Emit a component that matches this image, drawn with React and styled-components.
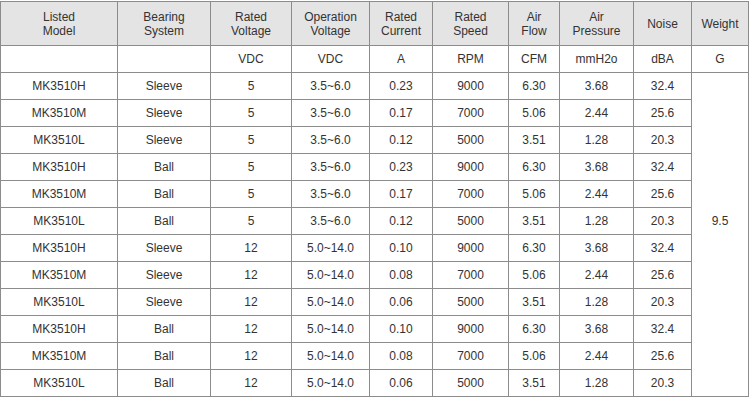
import React from "react";
import styled, { createGlobalStyle } from "styled-components";

const GlobalStyle = createGlobalStyle`
  body {
    margin: 0;
    background: #ffffff;
    font-family: "Liberation Sans", Arial, sans-serif;
  }
`;

const Wrap = styled.div`
  padding-top: 1px;
`;

const Table = styled.table`
  border-collapse: collapse;
  table-layout: fixed;
  width: 749px;
  font-size: 12px;
  color: #333333;
`;

const HeadCell = styled.th`
  background: #e4e4e4;
  border: 1px solid #8c8c8c;
  font-weight: normal;
  text-align: center;
  vertical-align: middle;
  line-height: 14px;
  height: 43px;
  padding: 0 2px;
`;

const Cell = styled.td`
  border: 1px solid #8c8c8c;
  text-align: center;
  vertical-align: middle;
  height: 26px;
  padding: 0 2px;
  line-height: 14px;
`;

const WeightCell = styled(Cell)`
  padding-bottom: 28px;
`;

const widths = [117, 93, 81, 78, 63, 76, 51, 74, 58, 57];

const headers = [
  ["Listed", "Model"],
  ["Bearing", "System"],
  ["Rated", "Voltage"],
  ["Operation", "Voltage"],
  ["Rated", "Current"],
  ["Rated", "Speed"],
  ["Air", "Flow"],
  ["Air", "Pressure"],
  ["Noise"],
  ["Weight"],
];

const units = ["", "", "VDC", "VDC", "A", "RPM", "CFM", "mmH2o", "dBA", "G"];

const variants = [
  ["MK3510H", "0.23", "9000", "6.30", "3.68", "32.4"],
  ["MK3510M", "0.17", "7000", "5.06", "2.44", "25.6"],
  ["MK3510L", "0.12", "5000", "3.51", "1.28", "20.3"],
];

const lowCurrent = { MK3510H: "0.10", MK3510M: "0.08", MK3510L: "0.06" };

const rows = [];
[
  ["5", "3.5~6.0"],
  ["12", "5.0~14.0"],
].forEach(([volt, range]) => {
  ["Sleeve", "Ball"].forEach((bearing) => {
    variants.forEach(([model, current, speed, flow, pressure, noise]) => {
      rows.push([
        model,
        bearing,
        volt,
        range,
        volt === "12" ? lowCurrent[model] : current,
        speed,
        flow,
        pressure,
        noise,
      ]);
    });
  });
});

const App = () => {
  return (
    <>
      <GlobalStyle />
      <Wrap>
        <Table>
          <colgroup>
            {widths.map((w, i) => (
              <col key={i} style={{ width: w }} />
            ))}
          </colgroup>
          <thead>
            <tr>
              {headers.map((lines, i) => (
                <HeadCell key={i}>
                  {lines.map((l, j) => (
                    <React.Fragment key={j}>
                      {j > 0 && <br />}
                      {l}
                    </React.Fragment>
                  ))}
                </HeadCell>
              ))}
            </tr>
          </thead>
          <tbody>
            <tr>
              {units.map((u, i) => (
                <Cell key={i}>{u}</Cell>
              ))}
            </tr>
            {rows.map((row, r) => (
              <tr key={r}>
                {row.map((v, i) => (
                  <Cell key={i}>{v}</Cell>
                ))}
                {r === 0 && <WeightCell rowSpan={rows.length}>9.5</WeightCell>}
              </tr>
            ))}
          </tbody>
        </Table>
      </Wrap>
    </>
  );
};

export default App;
